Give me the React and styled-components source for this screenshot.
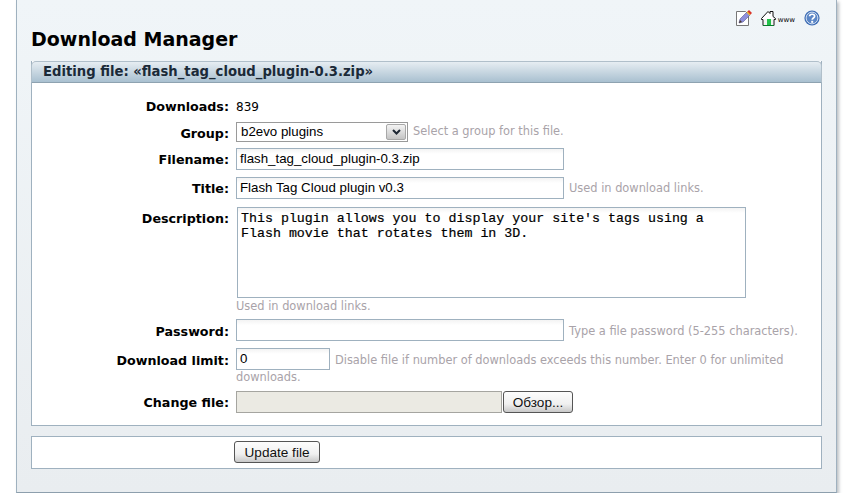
import React from "react";
import styled, { createGlobalStyle } from "styled-components";

const GlobalStyle = createGlobalStyle`
  html, body {
    margin: 0;
    padding: 0;
    background: #fff;
  }
  body {
    font-family: "DejaVu Sans", Verdana, sans-serif;
    font-size: 11px;
    color: #000;
  }
`;

const Page = styled.div`
  width: 821px;
  height: 493px;
  margin-left: 16px;
  box-sizing: border-box;
  padding: 0 14px;
  background: linear-gradient(#f0f5f8, #e9edf0);
  border: 1px solid #9fb1bf;
  border-top: none;
  border-bottom-color: #8d9fad;
  box-shadow: 2px 2px 3px rgba(90, 100, 110, 0.4);
`;

const TopBar = styled.div`
  height: 25px;
  padding: 5px 2px 0 0;
  display: flex;
  justify-content: flex-end;
  align-items: center;
`;

const IconLink = styled.a`
  display: flex;
  align-items: flex-end;
  margin-left: ${(p) => p.$gap || 0}px;
  color: #000;
`;

const WwwText = styled.span`
  margin: 0 0 2px 2px;
  font-size: 7px;
  line-height: 8px;
`;

const Heading = styled.h1`
  margin: -3px 0 0 0;
  height: 34px;
  font-size: 19px;
  line-height: 24px;
  font-weight: bold;
`;

const Panel = styled.div`
  border: 1px solid #9fb1bf;
  border-top: none;
  background: #fff;
`;

const PanelTitle = styled.div`
  height: 22px;
  margin: 0 -1px;
  box-sizing: border-box;
  padding: 1px 0 0 11px;
  border: 1px solid #b0bfca;
  border-bottom: 1px solid #8ea2b0;
  border-radius: 5px 5px 0 0;
  background: linear-gradient(#e6edf2, #a9c0d0);
  font-size: 13.2px;
  line-height: 18px;
  font-weight: bold;
  color: #1b2a38;
`;

const Form = styled.div`
  height: 342px;
  box-sizing: border-box;
  padding-top: 16px;
`;

const Row = styled.div`
  display: grid;
  grid-template-columns: 197px 1fr;
  column-gap: 7px;
  align-items: start;
  min-height: ${(p) => p.$height || 0}px;
`;

const Label = styled.label`
  text-align: right;
  font-size: 12.7px;
  font-weight: bold;
  line-height: 16px;
  padding-top: ${(p) => p.$pad ?? 4}px;
  color: #000;
`;

const Field = styled.div`
  display: flex;
  align-items: flex-start;
`;

const Value = styled.span`
  font-size: 12px;
  line-height: 16px;
`;

const TextInput = styled.div`
  box-sizing: border-box;
  width: ${(p) => p.$width}px;
  height: 22px;
  padding: 0 0 0 3px;
  border: 1px solid #9fb1bf;
  background: linear-gradient(#f3f3f3, #fff 5px);
  color: #000;
  font-family: "Liberation Sans", Arial, sans-serif;
  font-size: 13.3px;
  line-height: 20px;
  white-space: nowrap;
`;

const TextArea = styled.div`
  box-sizing: border-box;
  width: 509px;
  height: 91px;
  padding: 3px;
  margin-left: 1px;
  border: 1px solid #9fb1bf;
  background: linear-gradient(#f3f3f3, #fff 5px);
  font-family: "Liberation Mono", "Courier New", monospace;
  font-size: 13.3px;
  line-height: 15px;
  -webkit-text-stroke: 0.2px #000;
`;

const Select = styled.div`
  box-sizing: border-box;
  width: 172px;
  height: 20px;
  margin-top: 1px;
  display: flex;
  justify-content: space-between;
  border: 1px solid #9a9a9a;
  background: #fff;
  font-family: "Liberation Sans", Arial, sans-serif;
  font-size: 13.3px;
  line-height: 18px;
  padding-left: 4px;
`;

const SelectArrow = styled.span`
  width: 20px;
  height: 16px;
  margin: 1px;
  display: flex;
  align-items: center;
  justify-content: center;
  border: 1px solid #a8a8a8;
  border-radius: 2px;
  box-sizing: border-box;
  background: linear-gradient(#f4f4f4, #c4c4c4);
`;

const Hint = styled.span`
  color: #a9a3a9;
  font-size: 11.4px;
  line-height: 15px;
  margin-left: 5px;
  padding-top: ${(p) => p.$pad ?? 5}px;
  white-space: nowrap;
`;

const BelowHint = styled.div`
  color: #a9a3a9;
  font-size: 11.4px;
  line-height: 15px;
  padding-top: ${(p) => p.$pad || 0}px;
`;

const FileBox = styled.div`
  box-sizing: border-box;
  width: 266px;
  height: 22px;
  border: 1px solid #a5a5a0;
  background: #ebeae3;
`;

const Button = styled.button`
  box-sizing: border-box;
  width: ${(p) => p.$width}px;
  height: 22px;
  margin-left: ${(p) => p.$left || 0}px;
  padding: 0;
  border: 1px solid #555;
  border-radius: 3px;
  background: linear-gradient(#fdfdfd, #f0f0f0 60%, #c8c8c8);
  font-family: "Liberation Sans", Arial, sans-serif;
  font-size: 13.6px;
  color: #111;
`;

const ActionPanel = styled.div`
  height: 33px;
  margin-top: 10px;
  box-sizing: border-box;
  border: 1px solid #9fb1bf;
  background: #fff;
  padding: 4px 0 0 202px;
`;

const EditIcon = () => (
  <svg width="16" height="16" viewBox="0 0 16 16">
    <path d="M.5 1.5h9l3 3v11H.5z" fill="#fff" stroke="#777" />
    <path d="M3 13l1-4 7-7 3 3-7 7z" fill="#8f8fdc" stroke="#555590" strokeWidth=".6" />
    <path d="M11 2l2-2 3 3-2 2z" fill="#d9342a" />
    <path d="M10.5 2.5l3 3 1-1-3-3z" fill="#e8b830" />
    <path d="M3 13l1-3 2 2z" fill="#4a3a2a" />
  </svg>
);

const HomeIcon = () => (
  <svg width="15" height="16" viewBox="0 0 15 16">
    <path d="M.5 8.5L7 1.5l2 2V1.5h3v5l2.5 2v1H13v6H2v-6H.5z" fill="#fff" stroke="#111" strokeWidth="1" />
    <rect x="3" y="9" width="9" height="6" fill="#f2f2f2" />
    <rect x="6" y="9" width="4" height="6" fill="#23c24a" />
    <path d="M2 15.5h11" stroke="#0a7a2a" strokeWidth="1" />
  </svg>
);

const HelpIcon = () => (
  <svg width="16" height="16" viewBox="0 0 16 16">
    <circle cx="8" cy="8" r="7.6" fill="#3d6cb4" />
    <circle cx="8" cy="8" r="5.9" fill="#5b86c6" stroke="#d5e2f2" strokeWidth="1" />
    <path d="M5.6 6.2C5.8 3.6 10.6 3.6 10.6 6.2c0 1.8-2.4 1.8-2.4 3.6" fill="none" stroke="#fff" strokeWidth="1.7" />
    <rect x="7.2" y="10.8" width="2" height="2" fill="#fff" />
  </svg>
);

const ChevronDown = () => (
  <svg width="9" height="6" viewBox="0 0 9 6">
    <path d="M1 1l3.5 3.5L8 1" fill="none" stroke="#1d2733" strokeWidth="2" />
  </svg>
);

export default function App() {
  return (
    <>
      <GlobalStyle />
      <Page>
        <TopBar>
          <IconLink><EditIcon /></IconLink>
          <IconLink $gap={9}><HomeIcon /><WwwText>www</WwwText></IconLink>
          <IconLink $gap={9}><HelpIcon /></IconLink>
        </TopBar>
        <Heading>Download Manager</Heading>
        <Panel>
          <PanelTitle>Editing file: «flash_tag_cloud_plugin-0.3.zip»</PanelTitle>
          <Form>
            <Row $height={22}>
              <Label $pad={0}>Downloads:</Label>
              <Field><Value>839</Value></Field>
            </Row>
            <Row $height={27}>
              <Label $pad={5}>Group:</Label>
              <Field>
                <Select>
                  b2evo plugins
                  <SelectArrow><ChevronDown /></SelectArrow>
                </Select>
                <Hint $pad={3}>Select a group for this file.</Hint>
              </Field>
            </Row>
            <Row $height={29}>
              <Label>Filename:</Label>
              <Field><TextInput $width={328}>flash_tag_cloud_plugin-0.3.zip</TextInput></Field>
            </Row>
            <Row $height={30}>
              <Label>Title:</Label>
              <Field>
                <TextInput $width={328}>Flash Tag Cloud plugin v0.3</TextInput>
                <Hint $pad={4}>Used in download links.</Hint>
              </Field>
            </Row>
            <Row $height={112}>
              <Label>Description:</Label>
              <div>
                <TextArea>
                  This plugin allows you to display your site's tags using a
                  <br />
                  Flash movie that rotates them in 3D.
                </TextArea>
                <BelowHint $pad={1}>Used in download links.</BelowHint>
              </div>
            </Row>
            <Row $height={29}>
              <Label $pad={5}>Password:</Label>
              <Field>
                <TextInput $width={328} />
                <Hint>Type a file password (5-255 characters).</Hint>
              </Field>
            </Row>
            <Row $height={43}>
              <Label $pad={5}>Download limit:</Label>
              <div>
                <Field>
                  <TextInput $width={94}>0</TextInput>
                  <Hint>Disable file if number of downloads exceeds this number. Enter 0 for unlimited</Hint>
                </Field>
                <BelowHint>downloads.</BelowHint>
              </div>
            </Row>
            <Row>
              <Label>Change file:</Label>
              <Field>
                <FileBox />
                <Button $width={70} $left={1}>Обзор...</Button>
              </Field>
            </Row>
          </Form>
        </Panel>
        <ActionPanel>
          <Button $width={86}>Update file</Button>
        </ActionPanel>
      </Page>
    </>
  );
}
